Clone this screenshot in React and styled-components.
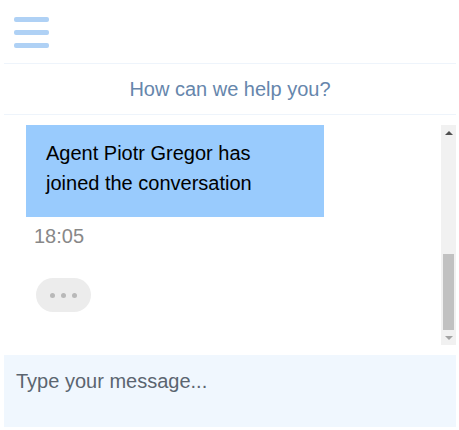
import React from "react";
import styled, { createGlobalStyle, css } from "styled-components";

const GlobalStyle = createGlobalStyle`
  html, body {
    margin: 0;
    padding: 0;
    background: #fff;
  }
  body {
    font-family: "Liberation Sans", Arial, sans-serif;
  }
`;

const Widget = styled.div`
  width: 452px;
  margin: 0 0 0 4px;
  display: flex;
  flex-direction: column;
`;

const Header = styled.div`
  height: 64px;
  display: flex;
  align-items: center;
  padding-left: 10px;
  border-bottom: 1px solid #eef4fb;
  box-sizing: border-box;
`;

const MenuButton = styled.button`
  width: 35px;
  height: 31px;
  padding: 0;
  border: none;
  background: transparent;
  display: flex;
  flex-direction: column;
  justify-content: space-between;
  cursor: pointer;
  margin-top: 1px;
`;

const MenuBar = styled.span`
  display: block;
  height: 5px;
  border-radius: 2px;
  background: #afd1f5;
`;

const Title = styled.div`
  height: 51px;
  box-sizing: border-box;
  border-bottom: 1px solid #eef4fb;
  display: flex;
  align-items: center;
  justify-content: center;
  font-size: 20px;
  color: #6686ac;
`;

const ChatRow = styled.div`
  margin-top: 10px;
  height: 220px;
  display: flex;
`;

const Messages = styled.div`
  flex: 1;
  display: flex;
  flex-direction: column;
  justify-content: flex-end;
  overflow: hidden;
  padding-bottom: 33px;
`;

const Scrollbar = styled.div`
  width: 15px;
  background: #f1f1f1;
  display: flex;
  flex-direction: column;
  align-items: center;
`;

const ArrowButton = styled.div`
  width: 15px;
  height: 15px;
  flex: none;
  display: flex;
  align-items: center;
  justify-content: center;

  &::after {
    content: "";
    width: 0;
    height: 0;
    border-left: 4px solid transparent;
    border-right: 4px solid transparent;
    ${(p) =>
      p.$dir === "up"
        ? css`
            border-bottom: 4px solid #505050;
          `
        : css`
            border-top: 4px solid #a3a3a3;
          `}
  }
`;

const TrackSpace = styled.div`
  flex: 1;
`;

const Thumb = styled.div`
  width: 11px;
  height: 76px;
  background: #c1c1c1;
`;

const Group = styled.div`
  margin-left: 22px;
  flex: none;
`;

const Bubble = styled.div`
  width: 298px;
  box-sizing: border-box;
  padding: 19px 20px;
  background: #99cbfd;
  color: #000;
  font-size: 20px;
  line-height: 30px;
`;

const Time = styled.div`
  margin-top: 8px;
  padding-left: 8px;
  font-size: 20px;
  line-height: 22px;
  color: #888;
`;

const Typing = styled.div`
  flex: none;
  margin: 31px 0 0 32px;
  width: 55px;
  height: 34px;
  border-radius: 17px;
  background: #ececec;
  display: flex;
  align-items: center;
  justify-content: center;
  gap: 6px;
`;

const Dot = styled.span`
  width: 5px;
  height: 5px;
  border-radius: 50%;
  background: #b8b8b8;
`;

const Composer = styled.textarea`
  margin-top: 10px;
  height: 72px;
  box-sizing: border-box;
  border: none;
  outline: none;
  resize: none;
  background: #f0f7fe;
  padding: 15px 12px;
  font-family: "Liberation Sans", Arial, sans-serif;
  font-size: 20px;
  line-height: 23px;
  color: #333;
  caret-color: #333;
  &::placeholder {
    color: #5b6570;
  }
`;

const messages = [
  { text: "Agent Piotr Gregor has joined the conversation", time: "18:05" },
];

export default function App() {
  return (
    <>
      <GlobalStyle />
      <Widget>
        <Header>
          <MenuButton aria-label="Menu">
            <MenuBar />
            <MenuBar />
            <MenuBar />
          </MenuButton>
        </Header>
        <Title>How can we help you?</Title>
        <ChatRow>
          <Messages>
            {messages.map((m, i) => (
              <Group key={i}>
                <Bubble>{m.text}</Bubble>
                <Time>{m.time}</Time>
              </Group>
            ))}
            <Typing>
              <Dot />
              <Dot />
              <Dot />
            </Typing>
          </Messages>
          <Scrollbar>
            <ArrowButton $dir="up" />
            <TrackSpace />
            <Thumb />
            <ArrowButton $dir="down" />
          </Scrollbar>
        </ChatRow>
        <Composer placeholder="Type your message..." autoFocus />
      </Widget>
    </>
  );
}
